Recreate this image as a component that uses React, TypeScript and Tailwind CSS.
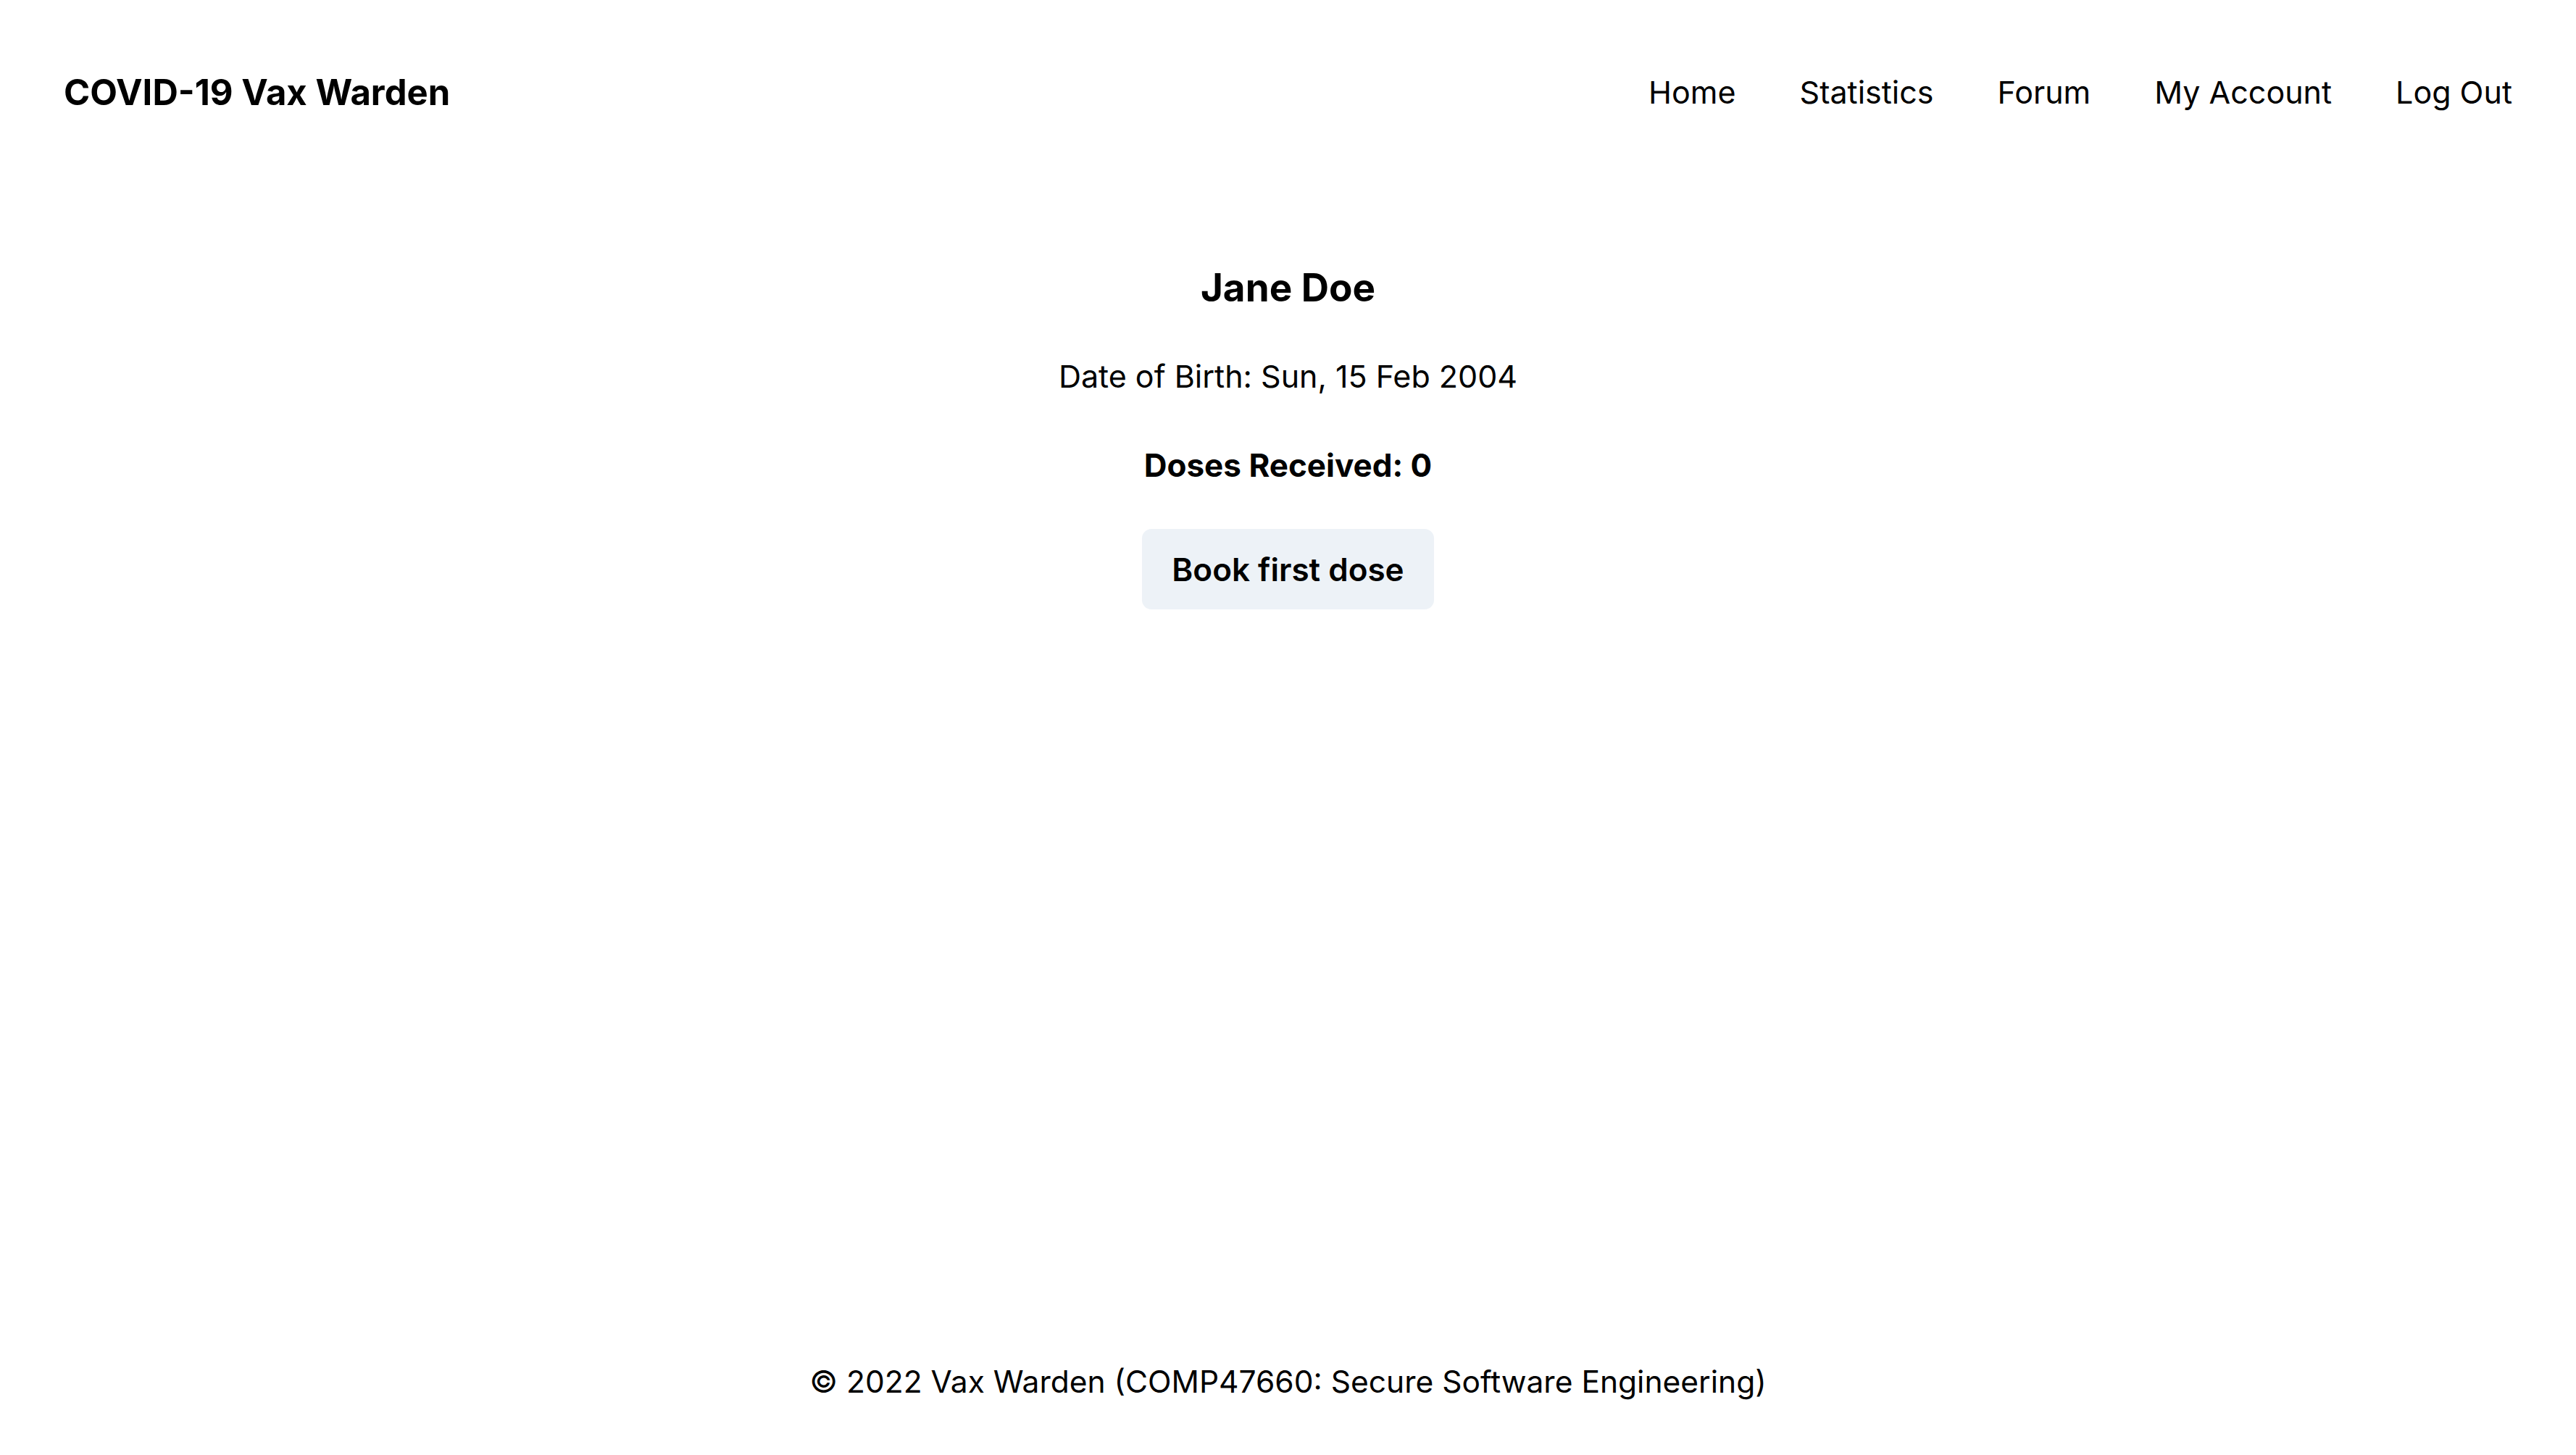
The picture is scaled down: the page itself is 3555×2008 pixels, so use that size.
const navLinks = ['Home', 'Statistics', 'Forum', 'My Account', 'Log Out'];

const App = () => {
  return (
    <div className="min-h-screen flex flex-col bg-white text-black font-['Inter',sans-serif]">
      {/* Header */}
      <header className="h-[254px] px-[88px] flex items-center justify-between">
        <h1 className="text-[49px] font-bold leading-none">COVID-19 Vax Warden</h1>
        <nav className="flex items-center gap-[88px] text-[43px]">
          {navLinks.map((link) => (
            <a key={link} href="#" className="leading-none">
              {link}
            </a>
          ))}
        </nav>
      </header>

      {/* Profile */}
      <main className="flex-1 flex flex-col items-center pt-[110px]">
        <h2 className="text-[53px] font-bold leading-[66px]">Jane Doe</h2>
        <p className="mt-[59px] text-[43px] leading-[60px]">Date of Birth: Sun, 15 Feb 2004</p>
        <p className="mt-[63px] text-[44px] font-bold leading-[60px]">Doses Received: 0</p>
        <button className="mt-[58px] h-[111px] px-[41px] rounded-[13px] bg-[#edf2f7] text-[44px] font-semibold">
          Book first dose
        </button>
      </main>

      {/* Footer */}
      <footer className="pb-[71px] text-center text-[42.5px] leading-[60px]">
        © 2022 Vax Warden (COMP47660: Secure Software Engineering)
      </footer>
    </div>
  );
};

export default App;
